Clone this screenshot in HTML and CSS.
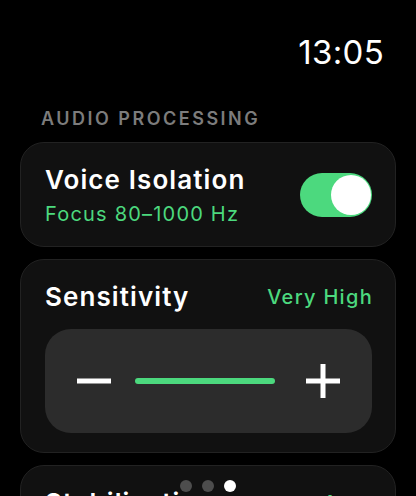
FILE: index.html
```html
<!DOCTYPE html>
<html lang="en">
<head>
    <meta charset="UTF-8">
    <meta name="viewport" content="width=device-width, initial-scale=1.0">
    <title>Audio Processing</title>

    <link rel="stylesheet" href="styles.css">
</head>
<body>
    <header class="status">
        <span class="time">13:05</span>
    </header>

    <div class="section-label">AUDIO PROCESSING</div>

    <div class="list">
        <div class="card card-toggle">
            <div class="card-text">
                <div class="card-title">Voice Isolation</div>
                <div class="card-sub">Focus 80–1000 Hz</div>
            </div>
            <div class="toggle on">
                <div class="knob"></div>
            </div>
        </div>

        <div class="card">
            <div class="card-head">
                <span class="card-title">Sensitivity</span>
                <span class="card-value">Very High</span>
            </div>
            <div class="stepper">
                <svg class="step-btn" width="34" height="34" viewBox="0 0 34 34">
                    <rect x="0" y="14.5" width="34" height="5" fill="#fff"/>
                </svg>
                <div class="track">
                    <div class="fill" style="width: 95%"></div>
                </div>
                <svg class="step-btn" width="34" height="34" viewBox="0 0 34 34">
                    <rect x="0" y="14.5" width="34" height="5" fill="#fff"/>
                    <rect x="14.5" y="0" width="5" height="34" fill="#fff"/>
                </svg>
            </div>
        </div>

        <div class="card">
            <div class="card-head">
                <span class="card-title">Stabilization</span>
                <span class="card-value">Auto</span>
            </div>
        </div>
    </div>

    <div class="pager">
        <span class="dot"></span>
        <span class="dot"></span>
        <span class="dot active"></span>
    </div>
</body>
</html>
```

FILE: styles.css
```css
html, body {
    height: 100%;
}

body {
    margin: 0;
    padding: 0;
    background-color: #000;
    color: #fff;
    font-family: Inter, "Noto Sans", sans-serif;
    overflow: hidden;
    position: relative;
}

.status {
    display: flex;
    justify-content: flex-end;
    padding: 32px 32px 0 0;
}

.time {
    font-size: 33px;
    line-height: 40px;
    font-weight: 400;
    letter-spacing: 0.3px;
}

.section-label {
    margin: 36px 0 12px 41px;
    font-size: 18px;
    line-height: 22px;
    font-weight: 600;
    letter-spacing: 2.5px;
    color: #7c7c7c;
}

.list {
    display: flex;
    flex-direction: column;
    gap: 12px;
    padding: 0 20px;
}

.card {
    background-color: #111;
    border: 1px solid #222;
    border-radius: 24px;
    padding: 21px 23px 19px 24px;
}

.card-toggle {
    display: flex;
    align-items: center;
    justify-content: space-between;
    padding-bottom: 20px;
}

.card-title {
    font-size: 26px;
    line-height: 32px;
    font-weight: 600;
    letter-spacing: 1.1px;
}

.card-sub {
    margin-top: 6px;
    font-size: 20px;
    line-height: 24px;
    color: #4cd97e;
    letter-spacing: 1.2px;
}

.card-head {
    display: flex;
    justify-content: space-between;
    align-items: center;
}

.card-value {
    font-size: 20px;
    font-weight: 500;
    color: #4cd97e;
    letter-spacing: 1.3px;
    margin-right: -1px;
}

.toggle {
    width: 72px;
    height: 44px;
    border-radius: 22px;
    background-color: #3a3a3c;
    position: relative;
}

.toggle.on {
    background-color: #4cd97e;
}

.knob {
    position: absolute;
    top: 2px;
    right: 1px;
    width: 40px;
    height: 40px;
    border-radius: 50%;
    background-color: #fff;
}

.stepper {
    margin-top: 16px;
    height: 104px;
    background-color: #2c2c2c;
    border-radius: 26px;
    display: flex;
    align-items: center;
    padding: 0 32px;
}

.step-btn {
    flex: none;
}

.track {
    flex: 1;
    margin: 0 24px;
    height: 6px;
}

.fill {
    height: 100%;
    border-radius: 3px;
    background-color: #4cd97e;
}

.pager {
    position: absolute;
    left: 0;
    right: 0;
    top: 480px;
    display: flex;
    justify-content: center;
    gap: 10px;
}

.dot {
    width: 12px;
    height: 12px;
    border-radius: 50%;
    background-color: #4d4d4d;
}

.dot.active {
    background-color: #fff;
}
```
